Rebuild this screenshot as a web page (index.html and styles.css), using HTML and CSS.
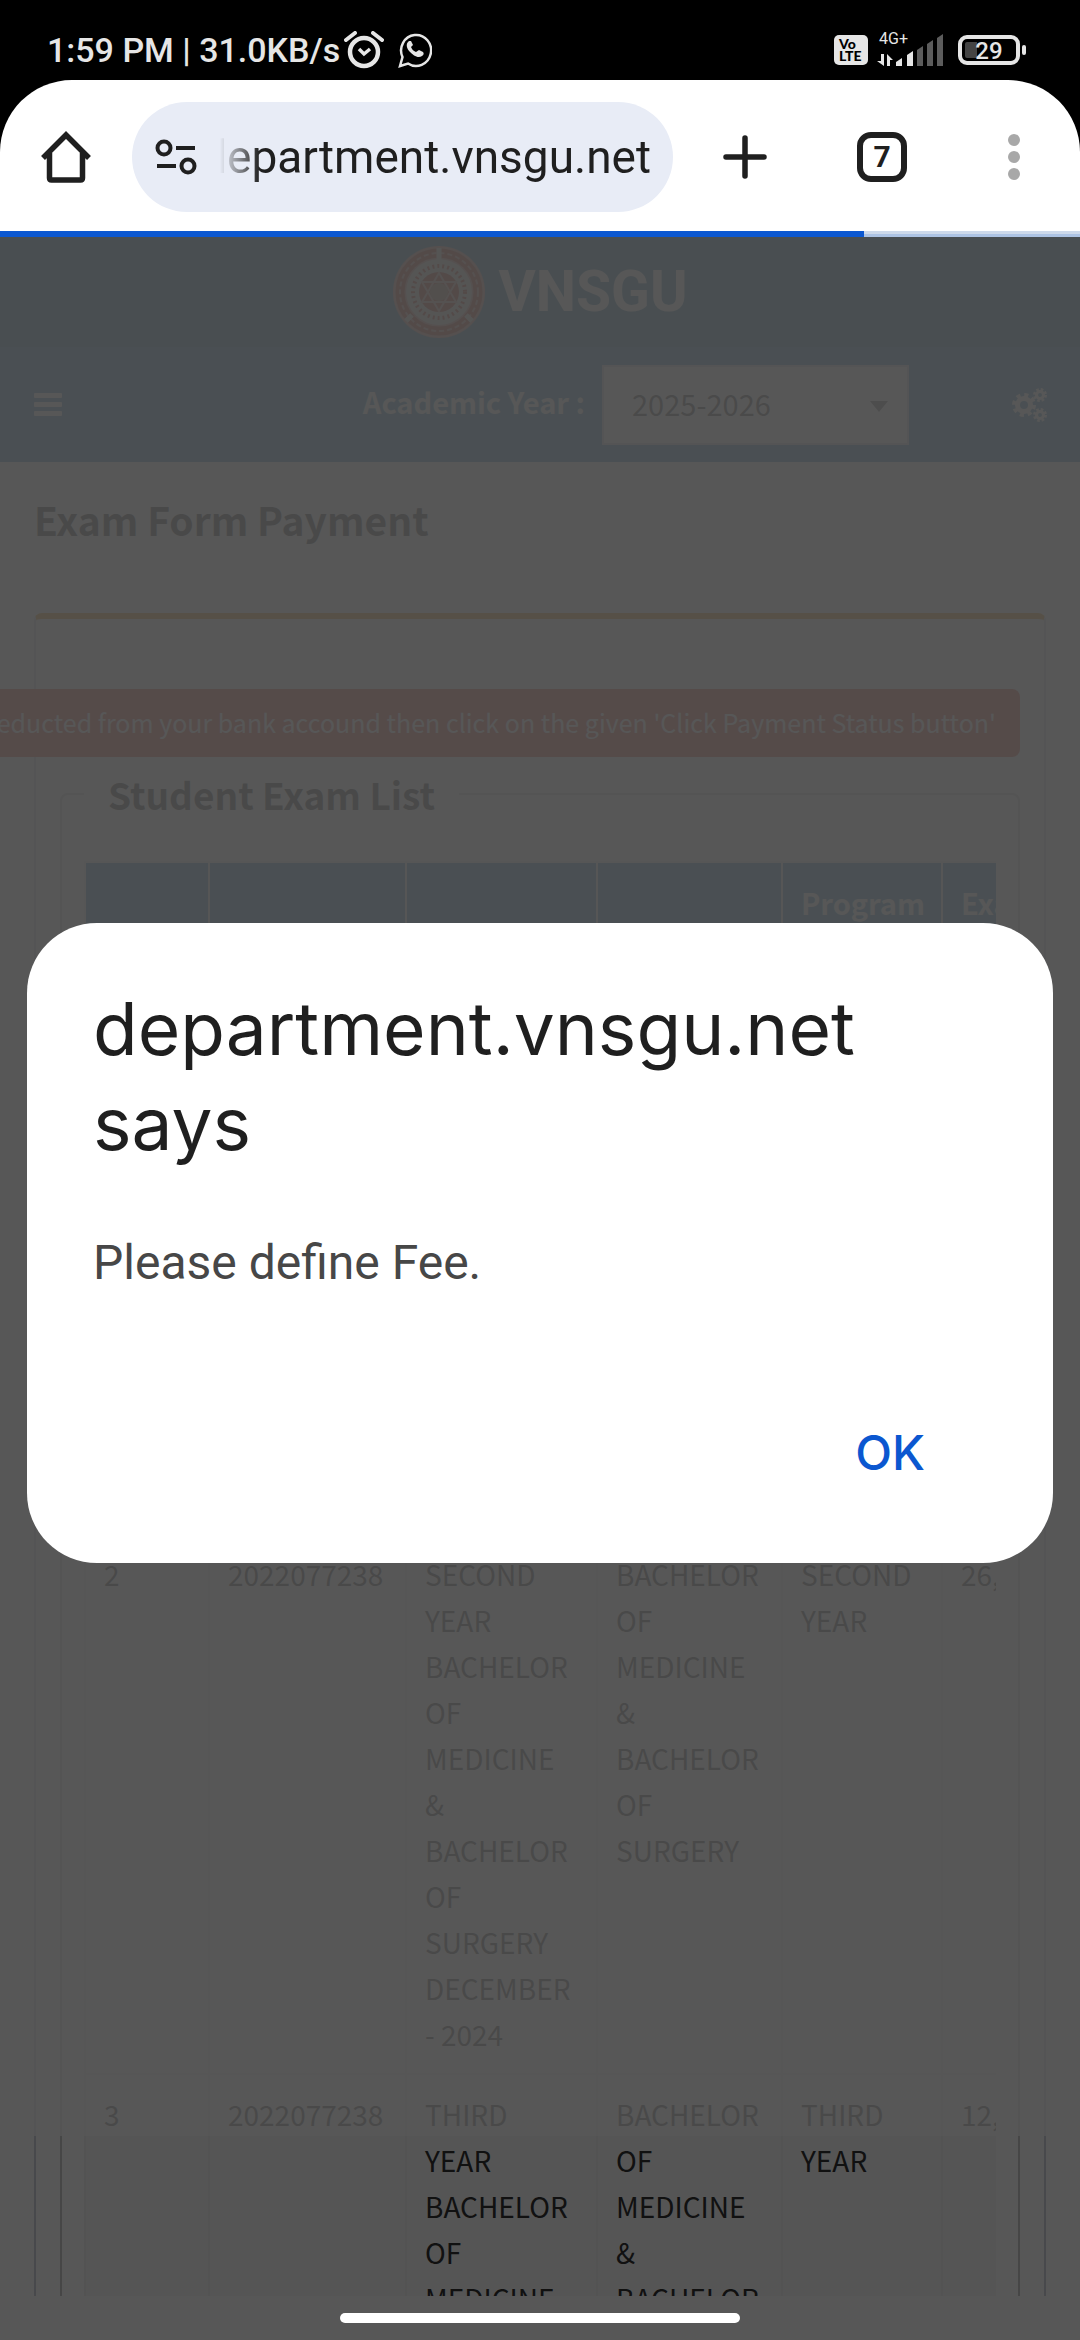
FILE: index.html
```
<!DOCTYPE html>
<html lang="en">
  <head>
    <meta charset="utf-8" />
    <meta name="viewport" content="width=device-width, initial-scale=1" />
    <title>Exam Form Payment</title>
    <link rel="stylesheet" href="styles.css">
  </head>
  <body>
    <div class="status-bar">
      <div class="status-left">
        <span class="clock">1:59 PM | 31.0KB/s</span>
        <svg class="icon-alarm" width="40" height="38" viewBox="0 0 40 38" fill="none" stroke="#e6e6e6">
          <circle cx="20" cy="21" r="14" stroke-width="4.5" />
          <path d="M15 18l5 5 6-5" stroke-width="3.5" />
          <path d="M2 9l9-7M29 2l9 7" stroke-width="4" stroke-linecap="round" />
        </svg>
        <svg class="icon-chat" width="34" height="36" viewBox="0 0 34 36" fill="none" stroke="#e6e6e6">
          <path d="M2 34l2.500-9A15 15.500 0 1 1 10 31.500z" stroke-width="2.500" />
          <path d="M11 9c-4 3-2 8 1 11s8 7 12 4c2-1 2-3 1-4l-4-2-3 2c-3-1-4-3-5-5l2-2-2-4z" fill="#e6e6e6" stroke="none" />
        </svg>
      </div>
      <div class="status-right">
        <div class="volte"><span>Vo</span><span>LTE</span></div>
        <div class="signal">
          <span class="network">4G+</span>
          <svg width="68" height="34" viewBox="0 0 68 34" fill="#e6e6e6">
            <path d="M5 21h3v12L1 28h4zM11 33V21l6 6h-3v6z" />
            <path d="M20 33v-4l6-4v8z" />
            <path d="M31 33V22l6-4v15z" />
            <path d="M41 33V17l6-4v20zM51 33V11l6-4v26zM61 33V5l6-4v32z" fill="#5c5c5c" />
          </svg>
        </div>
        <div class="battery"><span>29</span></div>
      </div>
    </div>

    <div class="browser">
      <div class="toolbar">
        <button class="tool-btn home" aria-label="Home">
          <svg width="50" height="52" viewBox="0 0 50 52" fill="none" stroke="#1f1f1f" stroke-width="5.500">
            <path d="M2 27L25 4l23 23M8.500 22v25q0 2 2 2h29q2 0 2-2V22" />
          </svg>
        </button>
        <div class="omnibox">
          <svg width="42" height="36" viewBox="0 0 42 36" fill="none" stroke="#1f1f1f" stroke-width="4">
            <circle cx="9" cy="9" r="6.500" />
            <circle cx="33" cy="27" r="6.500" />
            <path d="M21 9h19M2 27h19" />
          </svg>
          <input class="url" type="text" dir="rtl" aria-label="Address" value="department.vnsgu.net" readonly />
        </div>
        <button class="tool-btn plus" aria-label="New tab">
          <svg width="44" height="44" viewBox="0 0 44 44" stroke="#1f1f1f" stroke-width="5.500" stroke-linecap="round">
            <path d="M22 3v38M3 22h38" />
          </svg>
        </button>
        <button class="tool-btn tabs" aria-label="Open tabs">7</button>
        <button class="tool-btn more" aria-label="Menu">
          <svg width="12" height="46" viewBox="0 0 12 46" fill="#a8a8a8">
            <circle cx="6" cy="6" r="6" />
            <circle cx="6" cy="23" r="6" />
            <circle cx="6" cy="40" r="6" />
          </svg>
        </button>
      </div>
      <div class="progress"><div class="progress-done" style="width: 80%"></div></div>
    </div>

    <div class="stage">
      <div class="viewport">
        <header class="site-header">
          <svg width="92" height="92" viewBox="0 0 92 92" fill="none">
            <circle cx="46" cy="46" r="46" fill="#d98f80" />
            <circle cx="46" cy="46" r="39" stroke="#c2402c" stroke-width="9" />
            <circle cx="46" cy="46" r="39" stroke="#e0a090" stroke-width="2" stroke-dasharray="5 3" />
            <circle cx="46" cy="46" r="33" fill="#e3ddd8" />
            <path d="M46 2v12M19 69l-6 6M73 69l6 6" stroke="#e3ddd8" stroke-width="5" />
            <circle cx="46" cy="46" r="26" stroke="#c2402c" stroke-width="4" stroke-dasharray="2 3" />
            <circle cx="46" cy="46" r="20" fill="#c2402c" />
            <path d="M46 27l17 29H29zM46 65l17-29H29z" stroke="#e0b0a0" stroke-width="2" />
            <circle cx="46" cy="46" r="9" fill="#b58a6a" />
          </svg>
          <span class="brand">VNSGU</span>
        </header>
        <nav class="navbar">
          <button class="menu-btn" aria-label="Toggle menu">
            <svg width="28" height="24" viewBox="0 0 28 24" fill="#fff">
              <rect width="28" height="5" rx="1" />
              <rect y="9" width="28" height="5" rx="1" />
              <rect y="18" width="28" height="5" rx="1" />
            </svg>
          </button>
          <label class="year-label" for="year">Academic Year :</label>
          <div class="year-select">
            <select id="year">
              <option>2025-2026</option>
            </select>
          </div>
          <button class="gear-btn" aria-label="Settings">
            <svg width="36" height="34" viewBox="0 0 36 34" fill="none" stroke="#fff">
              <circle cx="12" cy="17" r="6.500" stroke-width="5" />
              <circle cx="12" cy="17" r="10" stroke-width="4" stroke-dasharray="4 3.850" />
              <circle cx="28" cy="7" r="3.500" stroke-width="3" />
              <circle cx="28" cy="7" r="5.500" stroke-width="3" stroke-dasharray="2.500 1.820" />
              <circle cx="28" cy="27" r="3.500" stroke-width="3" />
              <circle cx="28" cy="27" r="5.500" stroke-width="3" stroke-dasharray="2.500 1.820" />
            </svg>
          </button>
        </nav>

        <main class="content">
          <h1>Exam Form Payment</h1>
          <div class="box">
            <div class="alert-row">
              <p class="alert">deducted from your bank accound then click on the given 'Click Payment Status button'</p>
            </div>
            <fieldset>
              <legend>Student Exam List</legend>
              <div class="table-wrap">
                <table>
                  <colgroup>
                    <col class="col-no" />
                    <col class="col-spid" />
                    <col class="col-exam" />
                    <col class="col-program" />
                    <col class="col-term" />
                    <col class="col-fee" />
                  </colgroup>
                  <thead>
                    <tr>
                      <th>No</th>
                      <th>SPID</th>
                      <th>Exam</th>
                      <th>Program</th>
                      <th>Program Term Name</th>
                      <th>Exam Fee Amount</th>
                    </tr>
                  </thead>
                  <tbody>
                    <tr>
                      <td>1</td>
                      <td>2022077238</td>
                      <td>FIRST YEAR BACHELOR OF MEDICINE &amp; BACHELOR OF SURGERY DECEMBER - 2023</td>
                      <td>BACHELOR OF MEDICINE &amp; BACHELOR OF SURGERY</td>
                      <td>FIRST YEAR</td>
                      <td>12,000</td>
                    </tr>
                    <tr>
                      <td>2</td>
                      <td>2022077238</td>
                      <td>SECOND YEAR BACHELOR OF MEDICINE &amp; BACHELOR OF SURGERY DECEMBER - 2024</td>
                      <td>BACHELOR OF MEDICINE &amp; BACHELOR OF SURGERY</td>
                      <td>SECOND YEAR</td>
                      <td>26,000</td>
                    </tr>
                    <tr>
                      <td>3</td>
                      <td>2022077238</td>
                      <td>THIRD YEAR BACHELOR OF MEDICINE &amp; BACHELOR OF SURGERY</td>
                      <td>BACHELOR OF MEDICINE &amp; BACHELOR OF SURGERY</td>
                      <td>THIRD YEAR</td>
                      <td>12,000</td>
                    </tr>
                  </tbody>
                </table>
              </div>
            </fieldset>
          </div>
        </main>
        <div class="loading-mask"></div>
      </div>
      <div class="gesture-bar"></div>
      <div class="scrim"></div>
      <div class="gesture-pill"></div>
    </div>

    <div class="dialog-layer">
      <div class="dialog" role="alertdialog" aria-labelledby="dlg-title" aria-describedby="dlg-text">
        <h2 id="dlg-title">department.vnsgu.net says</h2>
        <p id="dlg-text">Please define Fee.</p>
        <div class="dialog-actions">
          <button class="ok-btn">OK</button>
        </div>
      </div>
    </div>
  </body>
</html>
```
FILE: styles.css
```
* {
  box-sizing: border-box;
}
body {
  margin: 0;
  height: 100vh;
  display: flex;
  flex-direction: column;
  overflow: hidden;
  background: #000;
  font-family: Roboto, sans-serif;
}
button {
  flex: none;
  border: none;
  background: none;
  padding: 0;
  font-family: inherit;
}
svg {
  display: block;
  flex: none;
}

/* phone status bar */
.status-bar {
  flex: none;
  height: 80px;
  padding: 20px 54px 0 47px;
  display: flex;
  justify-content: space-between;
  align-items: center;
  color: #e6e6e6;
}
.status-left,
.status-right {
  display: flex;
  align-items: center;
}
.clock {
  font-size: 34px;
  font-weight: 500;
  line-height: 40px;
}
.icon-alarm {
  margin-left: 4px;
}
.icon-chat {
  margin-left: 14px;
}
.volte {
  width: 34px;
  height: 30px;
  padding: 3px 5px;
  border-radius: 5px;
  background: #e6e6e6;
  color: #000;
  font-family: Lato, sans-serif;
  font-size: 14px;
  font-weight: 900;
  line-height: 12px;
}
.volte span {
  display: block;
}
.signal {
  position: relative;
  margin: 0 14px 0 8px;
}
.network {
  position: absolute;
  top: -2px;
  left: 3px;
  font-size: 16px;
  line-height: 16px;
}
.battery {
  position: relative;
  width: 62px;
  height: 30px;
  margin-right: 6px;
  border: 4px solid #e6e6e6;
  border-radius: 9px;
  background: linear-gradient(90deg, #444 15px, #000 15px);
  box-shadow: inset 0 0 0 3px #000;
  font-size: 24px;
  font-weight: 500;
  line-height: 24px;
  text-align: center;
}
.battery::after {
  content: "";
  position: absolute;
  top: 6px;
  right: -10px;
  width: 4px;
  height: 10px;
  border-radius: 2px;
  background: #e6e6e6;
}

/* browser toolbar */
.browser {
  flex: none;
  background: #fff;
  border-radius: 72px 72px 0 0;
}
.toolbar {
  height: 151px;
  padding: 0 60px 0 41px;
  display: flex;
  align-items: center;
}
.omnibox {
  flex: 1;
  min-width: 0;
  height: 110px;
  margin: 2px 50px 0 41px;
  padding: 0 22px 0 23px;
  display: flex;
  align-items: center;
  gap: 23px;
  border-radius: 55px;
  background: #e8ecf6;
}
.url {
  flex: 1;
  min-width: 0;
  padding: 0;
  border: none;
  outline: none;
  background: none;
  color: #1f1f1f;
  font-family: Roboto, sans-serif;
  font-size: 46px;
  line-height: 60px;
  mask-image: linear-gradient(90deg, transparent, #000 40px);
}
.tool-btn {
  margin-top: 2px;
}
.tabs {
  width: 50px;
  height: 50px;
  margin-left: 90px;
  border: 6px solid #1f1f1f;
  border-radius: 14px;
  color: #1f1f1f;
  font-size: 30px;
  font-weight: 700;
  line-height: 38px;
}
.more {
  margin-left: 101px;
}
.progress {
  height: 6px;
  background: linear-gradient(#cdd9ea 50%, #adc3e3 50%);
}
.progress-done {
  height: 100%;
  background: #0b57d0;
}

/* web page */
.stage {
  position: relative;
  flex: 1;
  min-height: 0;
  display: flex;
  flex-direction: column;
  background: #fff;
}
.viewport {
  position: relative;
  flex: 1;
  min-height: 0;
  overflow: hidden;
  color: #333;
  font-family: "Noto Sans CJK SC", "Noto Sans", sans-serif;
  font-size: 29px;
  line-height: 46px;
}
.site-header {
  height: 110px;
  display: flex;
  align-items: center;
  justify-content: center;
  gap: 14px;
  background: #367fa9;
}
.brand {
  color: #fff;
  font-family: Roboto, sans-serif;
  font-size: 57px;
  font-weight: 700;
}
.navbar {
  height: 115px;
  padding: 0 32px 0 34px;
  display: flex;
  align-items: center;
  background: #3c8dbc;
}
.year-label {
  margin: 0 0 8px auto;
  color: #fff;
  font-weight: 700;
}
.year-select {
  position: relative;
  margin: 0 103px 0 17px;
}
.year-select select {
  width: 307px;
  height: 80px;
  padding: 0 28px 4px;
  appearance: none;
  border: 2px solid #d2d6de;
  border-radius: 0;
  background: #fff;
  color: #444;
  font: inherit;
}
.year-select::after {
  content: "";
  position: absolute;
  top: 36px;
  right: 21px;
  border: 9px solid transparent;
  border-top: 11px solid #666;
  border-bottom: none;
}
.content h1 {
  margin: 0;
  padding: 31px 34px 33px;
  background: #fbfbfb;
  font-size: 39px;
  font-weight: 700;
  line-height: 53px;
}
.box {
  margin: 34px 34px 0;
  padding: 70px 24px 24px;
  border: 2px solid #d2d6de;
  border-top: 6px solid #f39c12;
  border-radius: 8px;
}
.alert-row {
  display: flex;
  justify-content: flex-end;
}
.alert {
  flex: none;
  margin: 0;
  padding: 10px 24px 12px;
  border-radius: 8px;
  background: #dd4b39;
  color: #fff;
  font-size: 25px;
  white-space: nowrap;
}
fieldset {
  min-width: 0;
  margin: 12px 0 0;
  padding: 42px 22px 24px;
  border: 2px solid #ccc;
  border-radius: 8px;
}
legend {
  padding: 0 24px;
  font-size: 37px;
  font-weight: 700;
  line-height: 50px;
}
.table-wrap {
  overflow: hidden;
}
table {
  width: 1020px;
  table-layout: fixed;
  border-collapse: collapse;
}
.col-no {
  width: 124px;
}
.col-spid {
  width: 197px;
}
.col-exam {
  width: 191px;
}
.col-program {
  width: 185px;
}
.col-term {
  width: 160px;
}
th,
td {
  padding: 16px 18px;
  border: 2px solid #f4f4f4;
  text-align: left;
  vertical-align: top;
}
td {
  padding-right: 19px;
  font-size: 28px;
}
th {
  padding-bottom: 22px;
  background: #3c8dbc;
  color: #fff;
  font-weight: 700;
  vertical-align: bottom;
}
tbody tr:nth-child(odd) {
  background: #f9f9f9;
}
.loading-mask {
  position: absolute;
  inset: 0 0 160px;
  background: rgba(255, 255, 255, 0.8);
}
.gesture-bar {
  flex: none;
  height: 44px;
}
.scrim {
  position: absolute;
  inset: 0;
  background: rgba(0, 0, 0, 0.66);
}
.gesture-pill {
  position: absolute;
  bottom: 17px;
  left: 50%;
  width: 400px;
  height: 10px;
  margin-left: -200px;
  border-radius: 5px;
  background: #fff;
}

/* javascript alert */
.dialog-layer {
  position: fixed;
  inset: 0;
  padding: 146px 27px 0;
  display: flex;
  align-items: center;
}
.dialog {
  flex: 1;
  padding: 58px 66px 60px;
  border-radius: 70px;
  background: #fff;
}
.dialog h2 {
  margin: 0;
  color: #1f1f1f;
  font-family: Inter, Roboto, sans-serif;
  font-size: 73px;
  font-weight: 400;
  line-height: 95px;
}
.dialog p {
  margin: 58px 0 0;
  color: #474747;
  font-size: 48px;
  line-height: 68px;
}
.dialog-actions {
  margin-top: 106px;
  padding: 0 26px;
  display: flex;
  justify-content: flex-end;
}
.ok-btn {
  padding: 0 36px;
  color: #0b57d0;
  font-family: Inter, Roboto, sans-serif;
  font-size: 48px;
  font-weight: 500;
  line-height: 100px;
}
```
